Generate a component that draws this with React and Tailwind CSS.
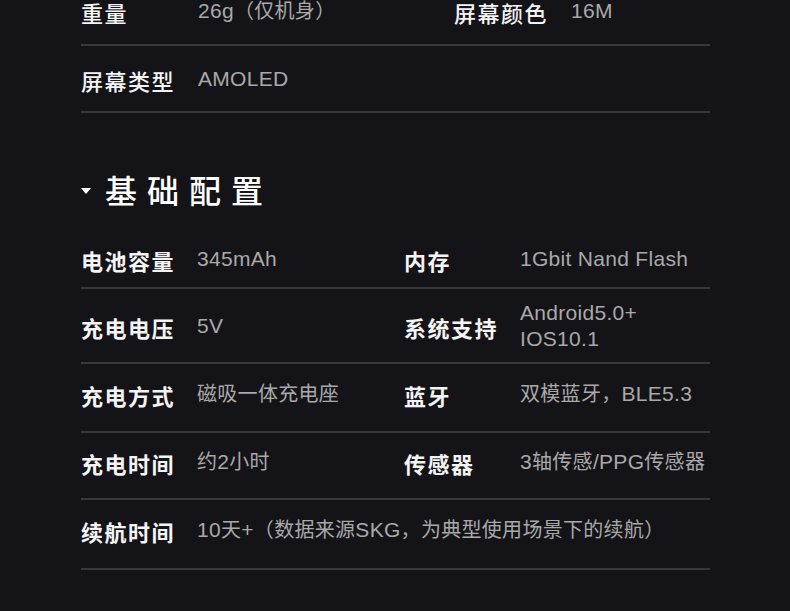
import React from "react";

const cjk = { fontFamily: '"Noto Sans CJK SC", "Noto Sans", sans-serif' };
const val = { fontFamily: '"Liberation Sans", "Noto Sans CJK SC", sans-serif' };

function Mixed({ text }) {
  const parts = text.match(/[\x20-\x7e]+|[^\x20-\x7e]+/g) || [];
  return parts.map((p, i) =>
    /^[\x20-\x7e]+$/.test(p) ? (
      <span key={i} className="text-[21px]">
        {p}
      </span>
    ) : (
      <span key={i}>{p}</span>
    )
  );
}

function Label({ children, light }) {
  return (
    <span
      style={cjk}
      className={`text-[22px] tracking-[1.5px] leading-none text-[#f4f4f4] whitespace-nowrap ${light ? "font-medium" : "font-bold"}`}
    >
      {children}
    </span>
  );
}

function Value({ children }) {
  return (
    <span style={val} className="text-[20px] tracking-[0.3px] leading-[26px] text-[#a9a9a9] whitespace-nowrap mb-[2px]">
      <Mixed text={children} />
    </span>
  );
}

function Row({ h, extra, cells, split, labelW }) {
  const two = cells.length > 2;
  return (
    <div className={`flex items-center border-b-2 border-[#38383c] ${h} ${extra || ""}`}>
      <div className={`flex items-center ${two ? split : "flex-1"}`}>
        <div className={`${labelW} shrink-0 flex items-center`}>{cells[0]}</div>
        {cells[1]}
      </div>
      {two && (
        <div className="flex items-center flex-1">
          <div className={`${labelW} shrink-0 flex items-center`}>{cells[2]}</div>
          {cells[3]}
        </div>
      )}
    </div>
  );
}

export default function App() {
  return (
    <div className="w-[790px] h-[611px] bg-[#141318] overflow-hidden">
      <div className="ml-[81px] w-[629px]">
        {/* top section */}
        <div className="-mt-[21px]">
          <Row
            h="h-[67px]"
            split="w-[373px]"
            labelW="w-[117px]"
            cells={[
              <Label light>重量</Label>,
              <Value>26g（仅机身）</Value>,
              <Label light>屏幕颜色</Label>,
              <Value>16M</Value>,
            ]}
          />
          <Row
            h="h-[67px]"
            extra="pt-[3px]"
            split="w-[373px]"
            labelW="w-[117px]"
            cells={[<Label light>屏幕类型</Label>, <Value>AMOLED</Value>]}
          />
        </div>

        {/* heading */}
        <div className="h-[108px] pt-[44px] flex items-center">
          <svg width="10" height="6" viewBox="0 0 10 6" className="mt-[4px]">
            <polygon points="0,0 10,0 5,6" fill="#ffffff" />
          </svg>
          <span
            style={cjk}
            className="ml-[14px] text-[32px] tracking-[10px] leading-none font-medium text-white"
          >
            基础配置
          </span>
        </div>

        {/* bottom section */}
        <Row
          h="h-[68px]"
          extra="pt-[11px]"
          split="w-[323px]"
          labelW="w-[116px]"
          cells={[
            <Label>电池容量</Label>,
            <Value>345mAh</Value>,
            <Label>内存</Label>,
            <Value>1Gbit Nand Flash</Value>,
          ]}
        />
        <Row
          h="h-[75px]"
          extra="pt-[3px]"
          split="w-[323px]"
          labelW="w-[116px]"
          cells={[
            <Label>充电电压</Label>,
            <Value>5V</Value>,
            <Label>系统支持</Label>,
            <span style={val} className="flex flex-col text-[21px] tracking-[0.3px] leading-[26px] text-[#a9a9a9] mb-[2px]">
              <span>Android5.0+</span>
              <span>IOS10.1</span>
            </span>,
          ]}
        />
        <Row
          h="h-[69px]"
          extra="pb-[5px]"
          split="w-[323px]"
          labelW="w-[116px]"
          cells={[
            <Label>充电方式</Label>,
            <Value>磁吸一体充电座</Value>,
            <Label>蓝牙</Label>,
            <Value>双模蓝牙，BLE5.3</Value>,
          ]}
        />
        <Row
          h="h-[67px]"
          extra="pb-[5px]"
          split="w-[323px]"
          labelW="w-[116px]"
          cells={[
            <Label>充电时间</Label>,
            <Value>约2小时</Value>,
            <Label>传感器</Label>,
            <Value>3轴传感/PPG传感器</Value>,
          ]}
        />
        <Row
          h="h-[70px]"
          extra="pb-[6px]"
          split="w-[323px]"
          labelW="w-[116px]"
          cells={[
            <Label>续航时间</Label>,
            <Value>10天+（数据来源SKG，为典型使用场景下的续航）</Value>,
          ]}
        />
      </div>
    </div>
  );
}
